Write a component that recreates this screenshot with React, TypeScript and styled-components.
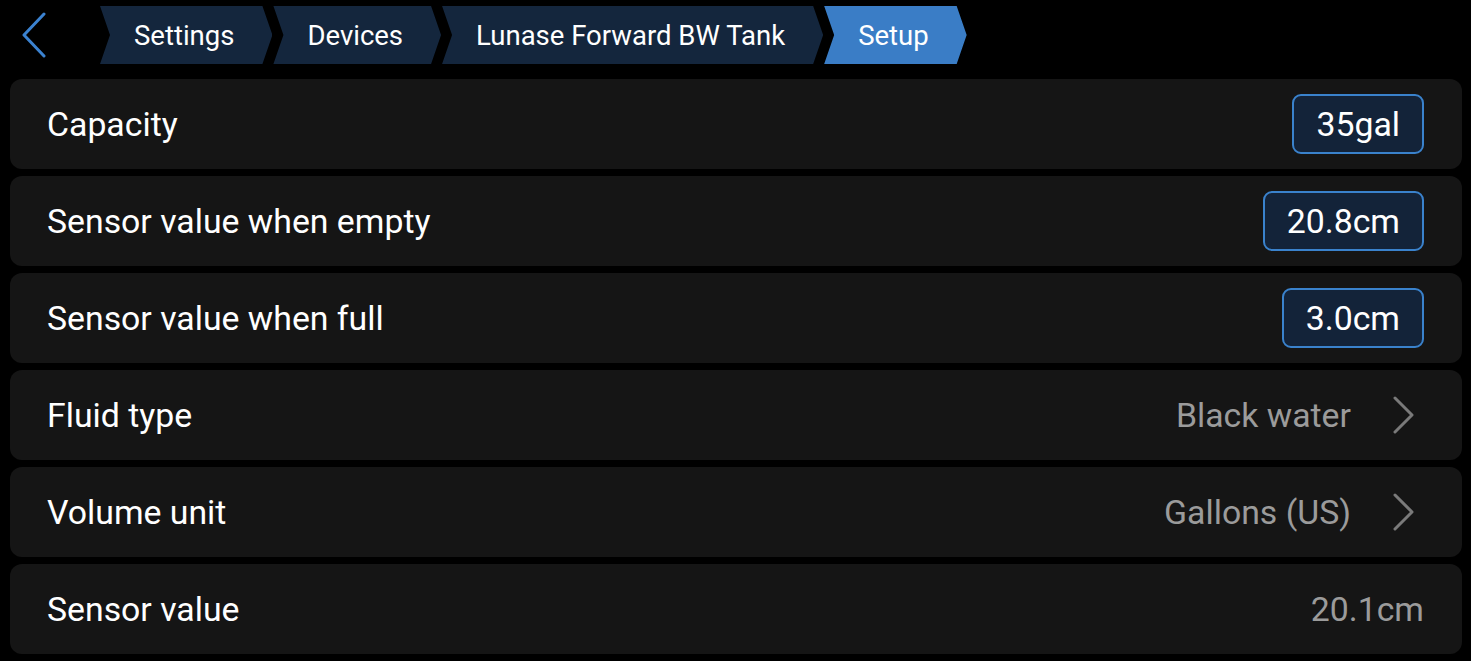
import React from "react";
import styled, { createGlobalStyle } from "styled-components";

const Global = createGlobalStyle`
  html, body {
    margin: 0;
    padding: 0;
    background: #000;
    font-family: Roboto, "Noto Sans", "Liberation Sans", sans-serif;
    color: #fff;
  }
  * { box-sizing: border-box; }
`;

const Page = styled.div`
  width: 1471px;
  height: 661px;
  background: #000;
  overflow: hidden;
`;

const Header = styled.div`
  height: 70px;
  display: flex;
  align-items: center;
`;

const BackButton = styled.button`
  width: 100px;
  height: 70px;
  padding: 0 0 0 21px;
  border: none;
  background: transparent;
  display: flex;
  align-items: center;
  cursor: pointer;
`;

const Crumbs = styled.nav`
  display: flex;
  gap: 1px;
  height: 58px;
`;

const Crumb = styled.div<{ $active?: boolean }>`
  height: 58px;
  display: flex;
  align-items: center;
  padding: 0 38px 0 34px;
  font-size: 27.5px;
  color: #fff;
  background: ${(p) => (p.$active ? "#3a7dc6" : "#14263d")};
  clip-path: polygon(
    0 0,
    calc(100% - 10px) 0,
    100% 50%,
    calc(100% - 10px) 100%,
    0 100%,
    10px 50%
  );
  white-space: nowrap;
`;

const List = styled.div`
  display: flex;
  flex-direction: column;
  gap: 7px;
  padding: 9px 9px 0 10px;
`;

const Row = styled.div`
  height: 90px;
  border-radius: 12px;
  background: #151515;
  display: flex;
  align-items: center;
  justify-content: space-between;
  padding: 0 38px 0 37px;
`;

const Label = styled.span`
  font-size: 33.8px;
  color: #fff;
`;

const ValueBox = styled.div`
  height: 60px;
  padding: 0 22px;
  border: 2.5px solid #3a82cc;
  border-radius: 9px;
  background: #132339;
  display: flex;
  align-items: center;
  font-size: 33.8px;
  color: #fff;
`;

const Trailing = styled.div`
  display: flex;
  align-items: center;
`;

const Value = styled.span`
  font-size: 33.8px;
  color: #9b9b9b;
`;

const Chevron = styled.svg`
  margin-left: 42px;
  margin-right: 9px;
  display: block;
`;

const BackIcon = () => (
  <svg width="26" height="46" viewBox="0 0 26 46">
    <polyline
      points="23,2 3,23 23,44"
      fill="none"
      stroke="#3b82d0"
      strokeWidth="3"
      strokeLinecap="round"
      strokeLinejoin="round"
    />
  </svg>
);

const NavChevron = () => (
  <Chevron width="22" height="38" viewBox="0 0 22 38">
    <polyline
      points="2,2 19,19 2,36"
      fill="none"
      stroke="#7a7a7a"
      strokeWidth="3"
      strokeLinecap="round"
      strokeLinejoin="round"
    />
  </Chevron>
);

type Item = { label: string; kind: "input" | "nav" | "text"; value: string };

const items: Item[] = [
  { label: "Capacity", kind: "input", value: "35gal" },
  { label: "Sensor value when empty", kind: "input", value: "20.8cm" },
  { label: "Sensor value when full", kind: "input", value: "3.0cm" },
  { label: "Fluid type", kind: "nav", value: "Black water" },
  { label: "Volume unit", kind: "nav", value: "Gallons (US)" },
  { label: "Sensor value", kind: "text", value: "20.1cm" },
];

const crumbs = ["Settings", "Devices", "Lunase Forward BW Tank", "Setup"];

export default function App() {
  return (
    <Page>
      <Global />
      <Header>
        <BackButton aria-label="Back">
          <BackIcon />
        </BackButton>
        <Crumbs>
          {crumbs.map((c, i) => (
            <Crumb key={c} $active={i === crumbs.length - 1}>
              {c}
            </Crumb>
          ))}
        </Crumbs>
      </Header>
      <List>
        {items.map((it) => (
          <Row key={it.label}>
            <Label>{it.label}</Label>
            {it.kind === "input" && <ValueBox>{it.value}</ValueBox>}
            {it.kind === "nav" && (
              <Trailing>
                <Value>{it.value}</Value>
                <NavChevron />
              </Trailing>
            )}
            {it.kind === "text" && <Value>{it.value}</Value>}
          </Row>
        ))}
      </List>
    </Page>
  );
}
